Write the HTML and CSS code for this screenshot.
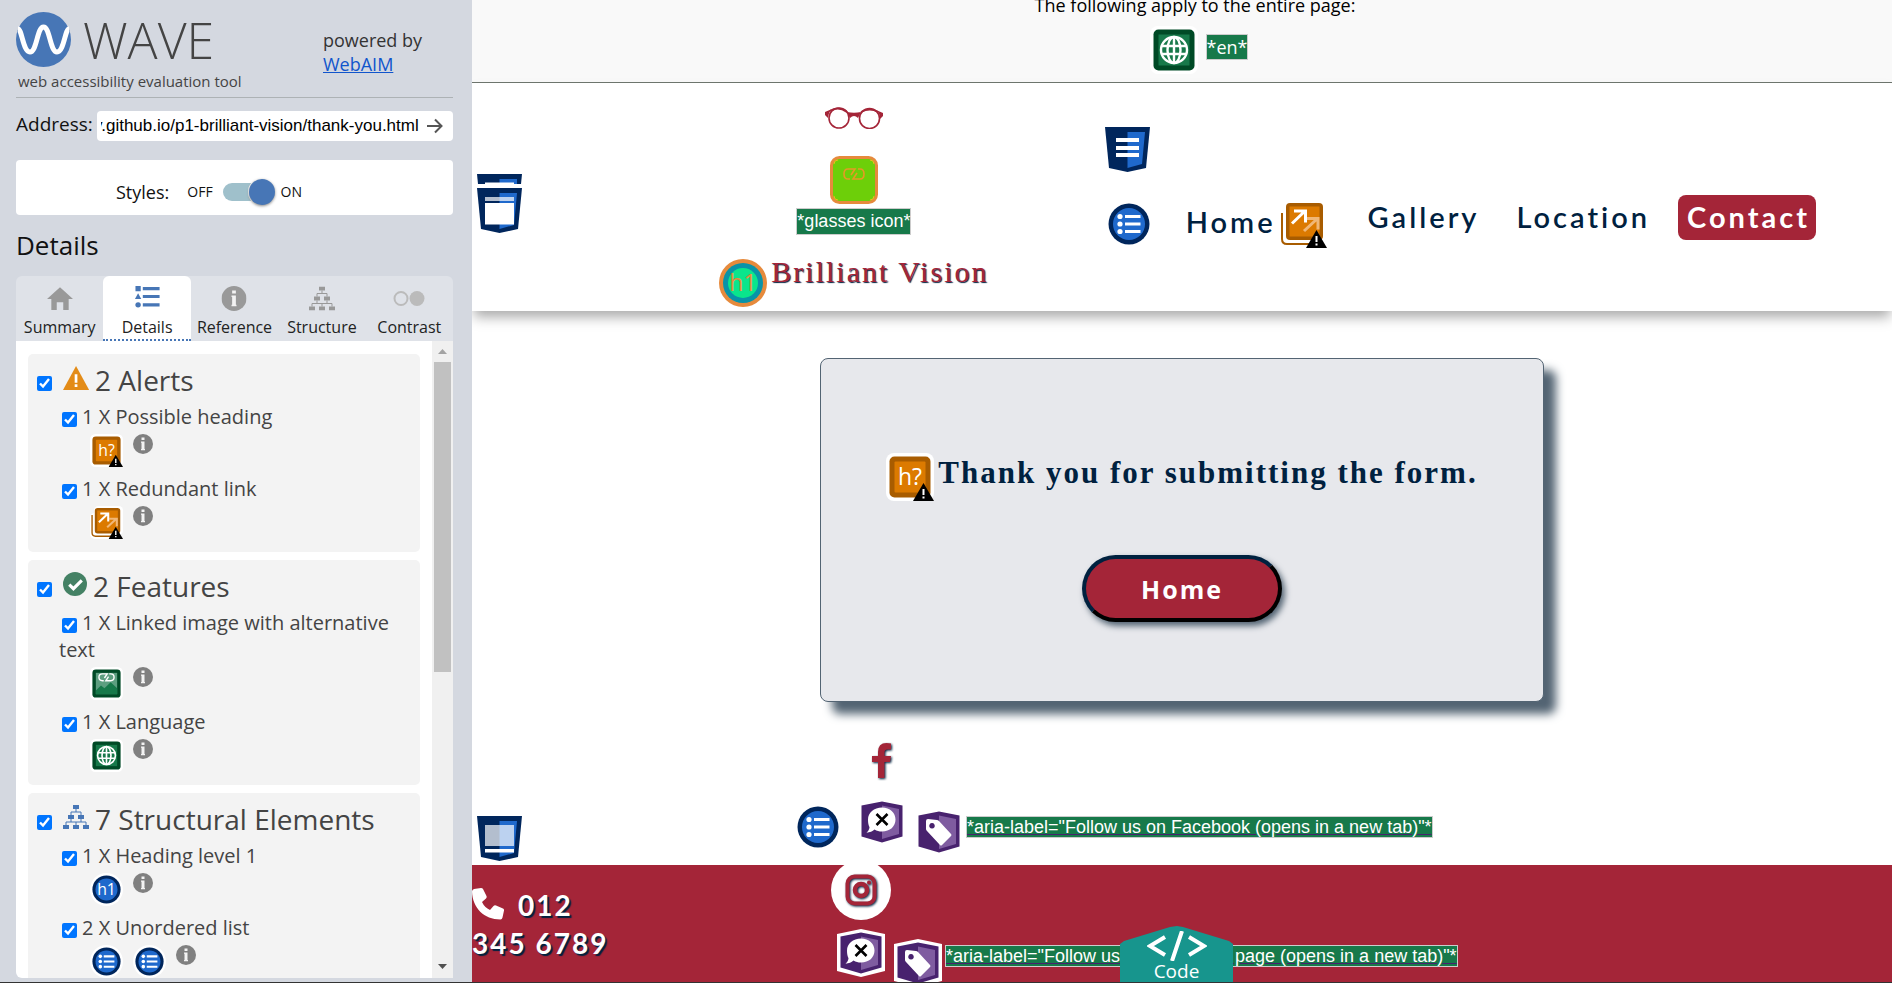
FILE: index.html
```html
<!DOCTYPE html>
<html lang="en">
<head>
<meta charset="utf-8">
<title>WAVE Report</title>
<link rel="stylesheet" href="styles.css">
</head>
<body>
<svg class="defs" aria-hidden="true">
  <defs>
    <symbol id="warn" viewBox="0 0 21 18"><path d="M10.500 0 21 18H0z"/><path d="M9.500 6h2v6h-2zM9.500 13.500h2v2h-2z" fill="#fff"/></symbol>
    <symbol id="b-heading" viewBox="0 0 48 48">
      <rect width="48" height="48" rx="8" fill="#fff"/>
      <rect x="3.500" y="3.500" width="41" height="41" rx="5" fill="#a85c00"/>
      <rect x="8.500" y="8.500" width="31" height="31" rx="1" fill="#dc7a00"/>
      <text x="24" y="32" text-anchor="middle" class="badge-text">h?</text>
      <use href="#warn" x="27" y="30" width="21" height="18"/>
    </symbol>
    <symbol id="b-redundant" viewBox="0 0 48 48">
      <rect x="6" width="42" height="42" rx="6" fill="#fff"/><rect x="0" y="10" width="40" height="38" rx="7" fill="#fff"/>
      <path d="M3 13v26q0 5 5 5h30" fill="none" stroke="#a85c00" stroke-width="2"/>
      <rect x="7" y="3" width="37" height="37" rx="4" fill="#a85c00"/>
      <rect x="10.500" y="6.500" width="30" height="30" fill="#dc7a00"/>
      <path d="M25 31 38 19M28 18.500h11v11" fill="none" stroke="#f0b777" stroke-width="3"/>
      <path d="M13 23.500 25.500 11.500M15 11h11.500v11.500" fill="none" stroke="#fff" stroke-width="3"/>
      <use href="#warn" x="27" y="30" width="21" height="18"/>
    </symbol>
    <symbol id="b-globe" viewBox="0 0 48 48">
      <rect width="48" height="48" rx="8" fill="#fff"/>
      <rect x="3.500" y="3.500" width="41" height="41" rx="5" fill="#004a26"/>
      <rect x="8.500" y="8.500" width="31" height="31" fill="#17794a"/>
      <g fill="none" stroke="#fff" stroke-width="2.400"><circle cx="24" cy="24" r="13"/><ellipse cx="24" cy="24" rx="6.500" ry="13"/><path d="M24 11v26M11.500 20h25M11.500 28h25"/></g>
    </symbol>
    <symbol id="b-image" viewBox="0 0 48 48">
      <rect width="48" height="48" rx="8" fill="#fff"/>
      <rect x="3.500" y="3.500" width="41" height="41" rx="5" fill="#004a26"/>
      <rect x="8.500" y="8.500" width="31" height="31" fill="#5d9f80"/>
      <path d="M8.500 34 16 27l5 4 9-9 9.500 9v8.500h-31z" fill="#17794a"/>
      <path d="M20 20h-2q-5 0-5-5t5-5h7l-4 6M28 10h2q5 0 5 5t-5 5h-7l4-6" fill="none" stroke="#fff" stroke-width="2"/>
    </symbol>
    <symbol id="b-image-alt" viewBox="0 0 48 48">
      <rect x="1.500" y="1.500" width="45" height="45" rx="8" fill="#6dcf09" stroke="#e68a3c" stroke-width="3"/>
      <path d="M4 8q0-4 4-4M44 8q0-4-4-4M4 40q0 4 4 4M44 40q0 4-4 4" fill="none" stroke="#e6c01c" stroke-width="1"/>
      <path d="M20 23h-2q-4 0-4-5t4-5h7l-4 6M28 13h2q4 0 4 5t-4 5h-7l4-6" fill="none" stroke="#e69a24" stroke-width="1.600"/>
    </symbol>
    <symbol id="b-h1" viewBox="0 0 48 48">
      <circle cx="24" cy="24" r="24" fill="#fff"/><circle cx="24" cy="24" r="20.500" fill="#00265c"/><circle cx="24" cy="24" r="16" fill="#1f69cc"/>
      <text x="24" y="32" text-anchor="middle" class="badge-text">h1</text>
    </symbol>
    <symbol id="b-h1-alt" viewBox="0 0 48 48">
      <circle cx="24" cy="24" r="24" fill="#e68a3c"/><circle cx="24" cy="24" r="20" fill="#0993a8"/><circle cx="24" cy="24" r="15" fill="#0ae58c"/>
      <text x="24" y="32" text-anchor="middle" class="badge-text badge-text-alt">h1</text>
    </symbol>
    <symbol id="b-list" viewBox="0 0 48 48">
      <circle cx="24" cy="24" r="24" fill="#fff"/><circle cx="24" cy="24" r="20.500" fill="#00265c"/><circle cx="24" cy="24" r="16" fill="#1f69cc"/>
      <g fill="#fff"><circle cx="15" cy="16.500" r="2.600"/><circle cx="15" cy="24" r="2.600"/><circle cx="15" cy="31.500" r="2.600"/><path d="M20 15h15.500v3H20zM20 22.500h15.500v3H20zM20 30h15.500v3H20z"/></g>
    </symbol>
    <symbol id="b-nav" viewBox="0 0 45 45">
      <path d="M0 0h45l-4 41-18.500 4L4 41z" fill="#00265c"/><path d="M22.500 5H40l-3 32-14.500 4z" fill="#1f69cc"/>
      <path d="M11 11h23v4H11zM11 19h23v4H11zM11 26h23v4H11z" fill="#fff"/>
    </symbol>
    <symbol id="b-footer" viewBox="0 0 45 45">
      <path d="M0 0h45l-4 41-18.500 4L4 41z" fill="#00265c"/><path d="M22.500 5H40l-3 32-14.500 4z" fill="#1f69cc"/>
      <path d="M8 9h29v21H8z" fill="#fff" opacity=".7"/><path d="M8 33h29v3.500H8z" fill="#fff"/>
    </symbol>
    <symbol id="b-header" viewBox="0 0 45 59">
      <path d="M0 0h45l-1 10H1z" fill="#00265c"/><path d="M22.500 5H40v5H22.500z" fill="#1f69cc"/><path d="M8 8.500h29V10H8z" fill="#fff"/>
      <path d="M0 14h45l-4 41-18.500 4L4 55z" fill="#00265c"/><path d="M22.500 19H40l-3 32-14.500 4z" fill="#1f69cc"/>
      <path d="M8 23h29v4H8z" fill="#fff" opacity=".7"/><path d="M8 29h29v21.500H8z" fill="#fff"/>
    </symbol>
    <symbol id="shield" viewBox="0 0 48 48">
      <path d="M0 5 24 0l24 5v37l-24 6-24-6z" fill="#fff"/><path d="M3.500 7.500 24 3.500l20.500 4v31L24 44.500l-20.500-6z" fill="#48226e"/><path d="M24 7.500l17 3.500v25l-17 5z" fill="#7f5ca0"/>
    </symbol>
    <symbol id="b-hidden" viewBox="0 0 48 48"><use href="#shield"/><path d="M24 9.500c8 0 13.500 5 13.500 12S32 33.500 24 33.500c-3 0-5-.500-7.500-2-2 1.800-4.500 3-8 3.200 1.800-1.500 2.800-3.500 3-5.500-1-2-1.500-4.500-1.500-7.500C10 14.500 16 9.500 24 9.500z" fill="#fff"/><path d="M18.500 16 29.500 27M29.500 16 18.500 27" stroke="#000" stroke-width="2.600"/></symbol>
    <symbol id="b-tag" viewBox="0 0 48 48"><use href="#shield"/><path fill-rule="evenodd" d="M11 13q0-2 2-2l9 1q1 0 2 1l12 13q1 1 0 2L27 37q-1 1-2 0L12 23q-1-1-1-2zM17 15a2.800 2.800 0 1 0 .01 0z" fill="#fff"/></symbol>
    <symbol id="info" viewBox="0 0 20 20"><circle cx="10" cy="10" r="10" fill="currentColor"/><path d="M8.500 3.500h3V6h-3zM8 7.500h3.500V15H12v1.200H8V15h.500V8.700H8z" fill="#f3f3f3"/></symbol>
    <symbol id="tree" viewBox="0 0 26 24"><path d="M10 0h6v4h-6zM5 10h6v4H5zM15 10h6v4h-6zM0 20h6v4H0zM10 20h6v4h-6zM20 20h6v4h-6z" fill="currentColor"/><path d="M13 4v3M8 10V7h10v3M8 14v3M18 14v3M3 20v-3h20v3M13 17v3" fill="none" stroke="currentColor"/></symbol>
  </defs>
</svg>

<div class="app">
  <aside class="sidebar">
    <header class="brand">
      <div class="brand-logo">
        <div class="brand-row">
          <svg class="brand-mark" viewBox="0 0 55 55"><circle cx="27.500" cy="27.500" r="27.500" fill="#4776b6"/><path d="M2 17C6 17 7 40 14 40S21 15 27.500 15 34 40 41 40 49 17 53 17" fill="none" stroke="#fff" stroke-width="5"/></svg>
          <span class="brand-name">WAVE</span>
        </div>
        <div class="brand-sub">web accessibility evaluation tool</div>
      </div>
      <div class="powered">powered by<br><a href="#webaim">WebAIM</a></div>
    </header>
    <form class="address">
      <label for="url">Address:</label>
      <div class="address-box">
        <input id="url" type="text" value="v.github.io/p1-brilliant-vision/thank-you.html">
        <button type="button" aria-label="Go"><svg viewBox="0 0 16 16"><path d="M0 8h14M8 1.500 14.500 8 8 14.500" fill="none" stroke="#555" stroke-width="2"/></svg></button>
      </div>
    </form>
    <div class="styles-box">
      <label for="styles-toggle" class="styles-label">Styles:</label>
      <span class="small">OFF</span>
      <input id="styles-toggle" class="toggle" type="checkbox" role="switch" checked>
      <span class="small">ON</span>
    </div>
    <h2 class="panel-title">Details</h2>
    <nav class="tabs">
      <button type="button" class="tab"><svg viewBox="0 0 24 21"><path d="M12 0 24 11h-4v10h-5v-7H9v7H4V11H0z" fill="currentColor"/></svg>Summary</button>
      <button type="button" class="tab tab-active"><svg viewBox="0 0 24 21"><path d="M1 0h5v5H1zM3.500 7 6.500 12.500h-6zM8 1h16v3H8zM8 8.500h16v3H8zM8 16.500h16v3H8z" fill="currentColor"/><circle cx="3.500" cy="18" r="2.600" fill="currentColor"/></svg>Details</button>
      <button type="button" class="tab"><svg viewBox="0 0 20 20"><use href="#info"/></svg>Reference</button>
      <button type="button" class="tab"><svg viewBox="0 0 26 24"><use href="#tree"/></svg>Structure</button>
      <button type="button" class="tab tab-contrast"><svg viewBox="0 0 32 16"><circle cx="8" cy="8" r="6.500" fill="none" stroke="currentColor" stroke-width="2"/><circle cx="24" cy="8" r="7.500" fill="currentColor"/></svg>Contrast</button>
    </nav>
    <div class="panel">
      <div class="panel-list">
        <section class="group">
          <h3 class="group-title"><input type="checkbox" id="g1" checked><svg class="group-icon" viewBox="0 0 25 23"><path d="M12.500 0 25 23H0z" fill="#e38b17"/><path d="M11.200 8h2.600v8h-2.600zM11.200 17.500h2.600v2.600h-2.600z" fill="#fff"/></svg><label for="g1">2 Alerts</label></h3>
          <div class="item"><input type="checkbox" id="i1" checked><label for="i1">1 X Possible heading</label><div class="item-icons"><svg class="badge-s"><use href="#b-heading"/></svg><svg class="info"><use href="#info"/></svg></div></div>
          <div class="item"><input type="checkbox" id="i2" checked><label for="i2">1 X Redundant link</label><div class="item-icons"><svg class="badge-s"><use href="#b-redundant"/></svg><svg class="info"><use href="#info"/></svg></div></div>
        </section>
        <section class="group">
          <h3 class="group-title"><input type="checkbox" id="g2" checked><svg class="group-icon" viewBox="0 0 23 23"><circle cx="11.500" cy="11.500" r="11.500" fill="#448164"/><path d="m6 12 4 4 8-8" fill="none" stroke="#fff" stroke-width="3"/></svg><label for="g2">2 Features</label></h3>
          <div class="item"><input type="checkbox" id="i3" checked><label for="i3">1 X Linked image with alternative text</label><div class="item-icons"><svg class="badge-s"><use href="#b-image"/></svg><svg class="info"><use href="#info"/></svg></div></div>
          <div class="item"><input type="checkbox" id="i4" checked><label for="i4">1 X Language</label><div class="item-icons"><svg class="badge-s"><use href="#b-globe"/></svg><svg class="info"><use href="#info"/></svg></div></div>
        </section>
        <section class="group">
          <h3 class="group-title"><input type="checkbox" id="g3" checked><svg class="group-icon group-icon-blue" viewBox="0 0 26 24"><use href="#tree"/></svg><label for="g3">7 Structural Elements</label></h3>
          <div class="item"><input type="checkbox" id="i5" checked><label for="i5">1 X Heading level 1</label><div class="item-icons"><svg class="badge-s"><use href="#b-h1"/></svg><svg class="info"><use href="#info"/></svg></div></div>
          <div class="item"><input type="checkbox" id="i6" checked><label for="i6">2 X Unordered list</label><div class="item-icons"><svg class="badge-s"><use href="#b-list"/></svg><svg class="badge-s"><use href="#b-list"/></svg><svg class="info"><use href="#info"/></svg></div></div>
        </section>
      </div>
      <div class="scrollbar" aria-hidden="true">
        <svg viewBox="0 0 9 5"><path d="M4.500 0 9 5H0z" fill="#a3a3a3"/></svg>
        <div class="thumb"></div>
        <svg viewBox="0 0 9 5"><path d="M4.500 5 9 0H0z" fill="#505050"/></svg>
      </div>
    </div>
  </aside>

  <main class="page">
    <div class="page-note">
      <p>The following apply to the entire page:</p>
      <div class="note-row"><svg class="badge"><use href="#b-globe"/></svg><span class="lang">*en*</span></div>
    </div>
    <header class="site-header">
      <svg class="landmark landmark-tall"><use href="#b-header"/></svg>
      <div class="site-logo">
        <svg class="glasses" viewBox="0 0 58 22"><g fill="none" stroke="#a42538"><circle cx="14" cy="11" r="10" stroke-width="1.600"/><circle cx="44.500" cy="11.500" r="10" stroke-width="1.600"/><path d="M5 4Q13-1.500 22 5M36 5Q45 0 53 5" stroke-width="2"/></g><path d="M0 5 7 2Q3 6 3 11L0 8zM58 6 51 3Q55 6 55 12L58 9zM22 5q7 1.500 14 0l-3 6q-4-4-8 0z" fill="#a42538"/></svg>
        <svg class="badge"><use href="#b-image-alt"/></svg>
        <span class="alt">*glasses icon*</span>
        <div class="site-title"><svg class="badge"><use href="#b-h1-alt"/></svg><h1>Brilliant Vision</h1></div>
      </div>
      <nav class="site-nav">
        <svg class="landmark"><use href="#b-nav"/></svg>
        <div class="nav-row">
          <svg class="badge nav-low"><use href="#b-list"/></svg>
          <a class="nav-link nav-low" href="#home">Home</a>
          <svg class="badge nav-low"><use href="#b-redundant"/></svg>
          <a class="nav-link nav-gap" href="#gallery">Gallery</a>
          <a class="nav-link" href="#location">Location</a>
          <a class="nav-link nav-active" href="#contact">Contact</a>
        </div>
      </nav>
    </header>
    <section class="card">
      <div class="thanks"><svg class="badge"><use href="#b-heading"/></svg><p>Thank you for submitting the form.</p></div>
      <button type="button" class="home-btn">Home</button>
    </section>
    <div class="social">
      <div class="side"><svg class="landmark"><use href="#b-footer"/></svg></div>
      <svg class="badge"><use href="#b-list"/></svg>
      <div class="stack">
        <svg class="fb" viewBox="0 0 20 35"><path d="M19 .500v6h-3.500q-3 0-3 3v3.500H19L18 19h-5.500v16H6V19H0v-6h6V9Q6 0 14.500 0z" fill="#a42538"/></svg>
        <svg class="badge"><use href="#b-hidden"/></svg>
      </div>
      <svg class="badge tag"><use href="#b-tag"/></svg>
      <a class="alt alt-link" href="#facebook">*aria-label="Follow us on Facebook (opens in a new tab)"*</a>
    </div>
    <footer class="site-footer">
      <div class="side phone"><svg viewBox="0 0 32 32"><path d="M2 1 9 0q1.500 0 2 1l3.500 7q.500 1.500-.500 2.500L10 14q2.500 5.500 8 8l3.500-4q1-1 2.500-.500l7 3q1.200.500 1 2l-1.500 7q-.500 2-2 2C12 31.500.500 20 0 3.500Q0 1.500 2 1z" fill="#fff"/></svg>012 345 6789</div>
      <div class="stack">
        <a class="insta" href="#instagram" aria-label="Instagram"><svg viewBox="0 0 32 32"><g fill="none" stroke="#a42538"><rect x="2.500" y="2.500" width="27" height="27" rx="7" stroke-width="4"/><circle cx="16" cy="16" r="6" stroke-width="4.500"/></g><circle cx="24" cy="8.500" r="2" fill="#a42538"/></svg></a>
        <svg class="badge"><use href="#b-hidden"/></svg>
      </div>
      <svg class="badge tag"><use href="#b-tag"/></svg>
      <a class="alt alt-link" href="#instagram">*aria-label="Follow us on Instagram page (opens in a new tab)"*</a>
    </footer>
    <button type="button" class="code-tab"><svg viewBox="0 0 60 30"><path d="M18 6 3 15l15 9M42 6l15 9-15 9M35 0 25 30" fill="none" stroke="#fff" stroke-width="4"/></svg>Code</button>
  </main>
</div>
<script>
  const url = document.getElementById('url');
  url.scrollLeft = url.scrollWidth;
</script>
</body>
</html>
```

FILE: styles.css
```css
* { box-sizing: border-box; }
body { margin: 0; font-family: "Open Sans", "Noto Sans", sans-serif; color: #111; }
h1, h2, h3, p { margin: 0; font-weight: 400; }
button { font: inherit; border: 0; padding: 0; background: none; color: inherit; }
svg { display: block; flex: none; }
.defs { position: absolute; width: 0; height: 0; }
.app { display: flex; height: 100vh; overflow: hidden; border-bottom: 1px solid #333; }
.badge { width: 48px; height: 48px; }
.badge-text { font: 23px "Open Sans", sans-serif; fill: #fff; }
.badge-text-alt { fill: #e68a3c; }

.sidebar { flex: 0 0 472px; display: flex; flex-direction: column; padding: 11px 19px 4px 16px; background: #d4d8e0; }
.brand { display: flex; justify-content: space-between; padding-bottom: 3px; border-bottom: 1px solid #adb2b5; }
.brand-row { display: flex; align-items: center; gap: 12px; height: 57px; }
.brand-mark { width: 55px; height: 55px; }
.brand-name { font-size: 50px; font-weight: 300; line-height: 56px; color: #444; }
.brand-sub { padding-left: 2px; font-size: 15px; line-height: 26px; color: #444; }
.powered { width: 130px; padding-top: 17px; font-size: 18px; line-height: 24px; color: #333; }
.powered a { color: #1155cc; }
.address { display: flex; align-items: center; justify-content: space-between; height: 30px; margin-top: 13px; font-size: 19px; }
.address label { line-height: 28px; padding-bottom: 4px; }
.address-box { display: flex; align-items: center; width: 356px; height: 30px; padding: 0 10px 0 4px; border-radius: 4px; background: #fff; }
.address-box input { flex: 1; min-width: 0; border: 0; padding: 0; outline: 0; background: none; font: 17px "Liberation Sans", sans-serif; color: #000; }
.address-box button { margin-left: 8px; }
.address-box button svg { width: 16px; height: 16px; }
.styles-box { display: flex; align-items: center; height: 55px; margin-top: 19px; padding: 8px 0 0 100px; border-radius: 4px; background: #fff; font-size: 18px; }
.styles-label { margin-right: 18px; }
.small { font-size: 14px; }
.toggle { appearance: none; position: relative; width: 46px; height: 18px; margin: 0 12px 0 10px; border-radius: 9px; background: #9fc0cb; }
.toggle::after { content: ""; position: absolute; top: -4px; right: -6px; width: 26px; height: 26px; border-radius: 50%; background: #4776b6; box-shadow: 0 1px 3px #888, 0 0 0 1px #fff; }
.panel-title { margin: 12px 0; font-size: 26px; line-height: 37px; }
.tabs { display: grid; grid-template-columns: repeat(5, 1fr); height: 65px; border-radius: 6px 6px 0 0; background: #dfe2e8; flex: none; }
.tab { display: flex; flex-direction: column; align-items: center; justify-content: space-between; padding-top: 10px; font-size: 16px; line-height: 28px; color: #222; }
.tab svg { width: 26px; height: 25px; color: #999; }
.tab-active { border-radius: 6px 6px 0 0; background: #fff; border-bottom: 2px dotted #4776b6; line-height: 24px; }
.tab-active svg { color: #4776b6; height: 22px; }
.tab-contrast svg { width: 32px; color: #bbb; }
.panel { flex: 1; min-height: 0; display: flex; overflow: hidden; border-radius: 0 0 0 6px; background: #fff; }
.panel-list { flex: 1; padding: 13px 12px 0; overflow: hidden; }
.group { margin-bottom: 8px; padding: 0 0 4px 31px; border-radius: 5px; background: #f3f3f3; color: #444; }
.group-title { display: flex; align-items: center; height: 49px; margin-left: -22px; padding-top: 3px; font-size: 28px; }
.group input { width: 15px; height: 15px; margin: 0; }
.group-title input { margin-top: 6px; }
.group-icon { height: 24px; margin: 0 6px 4px 11px; }
.group-icon-blue { color: #4776b6; }
.item { font-size: 20px; line-height: 27px; }
.item input { margin: 0 5px 0 3px; vertical-align: -3px; }
.item-icons { display: flex; align-items: flex-start; gap: 10px; height: 45px; padding: 4px 0 0 31px; }
.group .item:last-child { padding-bottom: 1px; }
.badge-s { width: 33px; height: 33px; }
.info { width: 20px; height: 20px; color: #808080; }
.scrollbar { width: 21px; display: flex; flex-direction: column; align-items: center; justify-content: space-between; padding: 8px 0 9px; background: #f0f0f0; }
.scrollbar svg { width: 9px; height: 5px; }
.thumb { width: 17px; height: 50%; margin: 8px 0 auto; background: #c1c1c1; }

.page { position: relative; flex: 1; min-width: 0; display: flex; flex-direction: column; overflow: hidden; background: #fff; }
.page-note { display: flex; flex-direction: column; align-items: center; padding-left: 26px; border-bottom: 1px solid #6b736b; background: #f9f9f9; color: #000; }
.page-note p { height: 25px; margin-top: -7px; font-size: 18px; line-height: 25px; }
.note-row { display: flex; gap: 8px; height: 64px; padding: 8px 0 8px 8px; }
.lang, .alt { border: 1px solid #ccc; background: #17794a; color: #fff; white-space: nowrap; }
.lang { height: 26px; margin-top: 8px; font-size: 18px; line-height: 24px; }
.alt { font: 18px/20px "Liberation Sans", sans-serif; }
.alt-link { text-decoration-color: #48226e; }
.landmark { width: 45px; height: 45px; }
.landmark-tall { height: 59px; margin: 91px 0 0 5px; }
.site-header { display: grid; grid-template-columns: 15% 24% 1fr; align-items: start; flex: none; height: 228px; background: #fff; box-shadow: 0 8px 12px -2px #aaa; }
.site-logo { display: flex; flex-direction: column; align-items: center; padding: 24px 3px 0 0; }
.glasses { width: 58px; height: 22px; margin-bottom: 27px; }
.site-logo .alt { margin-top: 4px; line-height: 25px; }
.site-title { display: flex; gap: 4px; margin-top: 18px; }
.site-title .badge { margin-top: 6px; }
.site-title h1 { font: 30px/38px "Liberation Serif", serif; letter-spacing: 2px; color: #a42538; text-shadow: 1px 1px 1px #00213f; white-space: nowrap; }
.site-nav { padding: 44px 76px 0 0; justify-self: end; }
.nav-row { display: flex; align-items: flex-start; margin-top: 23px; }
.nav-row .badge { margin-top: 5px; }
.nav-row .nav-low { margin-top: 5px; }
.nav-link { margin-left: 22px; padding: 0 6px 2px 9px; border-radius: 8px; font: 600 29px/43px Lato, sans-serif; letter-spacing: 3px; color: #00213f; text-decoration: none; }
.nav-low.nav-link { margin-left: 24px; padding-right: 3px; }
.nav-gap { margin-left: 32px; }
.nav-active { background: #a42538; color: #fff; font-weight: 700; }
.card { display: flex; flex-direction: column; align-items: center; justify-content: space-between; flex: none; width: 51%; height: 344px; margin: 47px auto 0; padding: 92px 0 79px; border: 1px solid #536473; border-radius: 8px; background: #e7e8ec; box-shadow: 12px 12px 10px #536473; }
.thanks { display: flex; gap: 4px; }
.thanks .badge { margin-top: 2px; }
.thanks p { font: 700 31px/44px "Liberation Serif", serif; letter-spacing: 2px; color: #00213f; white-space: nowrap; }
.home-btn { width: 200px; height: 67px; border: 4px solid; border-color: #00213f #000 #000 #00213f; border-radius: 34px; background: #a42538; color: #fff; font-weight: 700; font-size: 25px; letter-spacing: 2px; box-shadow: 3px 4px 6px #536473; }
.social, .site-footer { display: flex; align-items: flex-end; }
.social { flex: none; height: 163px; padding-bottom: 14px; }
.side { flex: 0 0 359px; }
.social .side { flex-basis: 322px; padding-left: 5px; margin-bottom: -10px; }
.stack { display: flex; flex-direction: column; align-items: center; gap: 20px; }
.social .stack { margin: 0 0 5px 16px; }
.fb { width: 20px; height: 35px; filter: drop-shadow(1px 1px 1px #00213f); }
.tag { margin: 0 3px 0 9px; }
.social .tag { margin-bottom: -5px; }
.social .alt { margin-bottom: 13px; }
.site-footer { flex: 1; align-items: flex-start; background: #a42538; }
.phone { padding: 21px 200px 0 0; color: #fff; font: 700 28px/38px Lato, sans-serif; letter-spacing: 2px; text-shadow: 2px 2px 1px #00213f; }
.phone svg { display: inline-block; width: 32px; height: 32px; margin-right: 14px; vertical-align: -4px; }
.site-footer .stack { gap: 9px; margin-top: -5px; }
.insta { display: flex; align-items: center; justify-content: center; width: 60px; height: 60px; border-radius: 50%; background: #fff; }
.insta svg { width: 32px; height: 32px; filter: drop-shadow(1px 1px 1px #00213f); }
.site-footer .tag { margin: 74px 3px 0; }
.site-footer .alt { margin-top: 80px; }
.code-tab { position: absolute; bottom: 0; left: 648px; width: 113px; height: 56px; display: flex; flex-direction: column; align-items: center; padding-top: 5px; background: #17958d; clip-path: polygon(0 18px, 4px 15px, 50px 1px, 57px 0, 63px 1px, 109px 15px, 113px 18px, 113px 56px, 0 56px); color: #fff; font-size: 19px; line-height: 20px; }
.code-tab svg { width: 60px; height: 30px; }
```
